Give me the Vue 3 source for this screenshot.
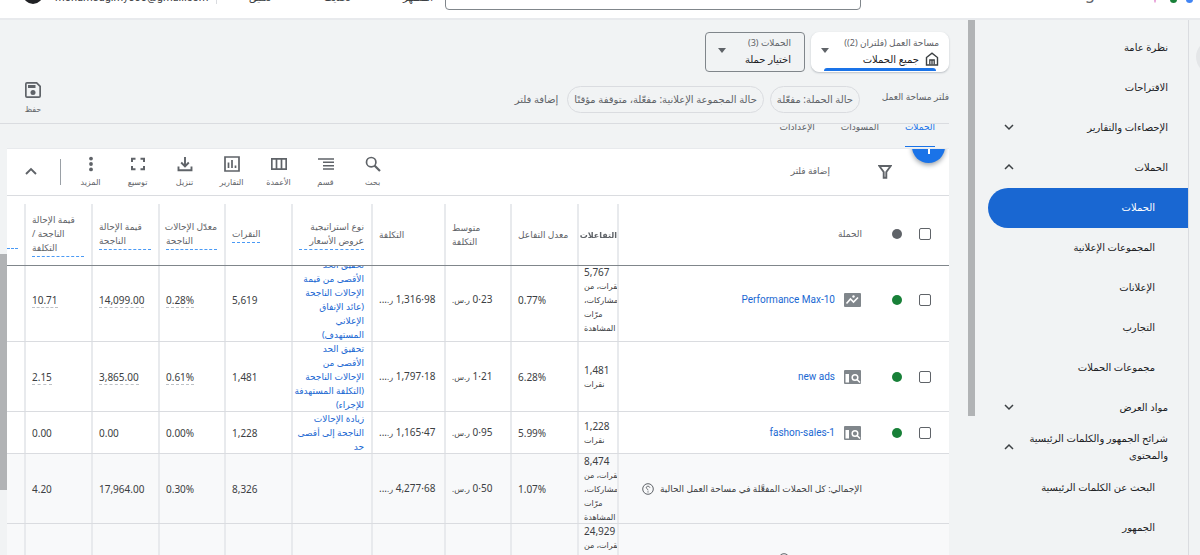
<script setup>
import { ref, onMounted } from 'vue'

const nav = [
  { label: 'نظرة عامة' },
  { label: 'الاقتراحات' },
  { label: 'الإحصاءات والتقارير', arrow: 'down' },
  { label: 'الحملات', arrow: 'up' },
  { label: 'الحملات', sub: true, active: true },
  { label: 'المجموعات الإعلانية', sub: true },
  { label: 'الإعلانات', sub: true },
  { label: 'التجارب', sub: true },
  { label: 'مجموعات الحملات', sub: true },
  { label: 'مواد العرض', arrow: 'down' },
  { label: 'شرائح الجمهور والكلمات الرئيسية والمحتوى', arrow: 'up' },
  { label: 'البحث عن الكلمات الرئيسية', sub: true },
  { label: 'الجمهور', sub: true }
]

const tools = [
  { id: 'search', label: 'بحث' },
  { id: 'segment', label: 'قسم' },
  { id: 'columns', label: 'الأعمدة' },
  { id: 'reports', label: 'التقارير' },
  { id: 'download', label: 'تنزيل' },
  { id: 'expand', label: 'توسيع' },
  { id: 'more', label: 'المزيد' }
]

const heads = [
  { key: 'inter', lines: ['التفاعلات'], bold: true },
  { key: 'rate', lines: ['معدل التفاعل'] },
  { key: 'avg', lines: ['متوسط', 'التكلفة'] },
  { key: 'cost', lines: ['التكلفة'] },
  { key: 'strategy', lines: ['نوع استراتيجية', 'عروض الأسعار'], dashed: true },
  { key: 'clicks', lines: ['النقرات'], dashed: true },
  { key: 'conv', lines: ['معدّل الإحالات', 'الناجحة'], dashed: true },
  { key: 'value', lines: ['قيمة الإحالة', 'الناجحة'], dashed: true },
  { key: 'ratio', lines: ['قيمة الإحالة', 'الناجحة /', 'التكلفة'], dashed: true }
]

const mixed = ['نقرات، من', 'مشاركات،', 'مرّات', 'المشاهدة']
const rows = [
  {
    name: 'Performance Max-10', type: 'pmax', inter: ['5,767', ...mixed], rate: '0.77%', avg: '0·23', cost: '1,316·98',
    strategy: ['تحقيق الحد', 'الأقصى من قيمة', 'الإحالات الناجحة', '(عائد الإنفاق', 'الإعلاني', 'المستهدف)'],
    clicks: '5,619', conv: '0.28%', value: '14,099.00', ratio: '10.71', under: true
  },
  {
    name: 'new ads', type: 'search', inter: ['1,481', 'نقرات'], rate: '6.28%', avg: '1·21', cost: '1,797·18',
    strategy: ['تحقيق الحد', 'الأقصى من', 'الإحالات الناجحة', '(التكلفة المستهدفة', 'للإجراء)'],
    clicks: '1,481', conv: '0.61%', value: '3,865.00', ratio: '2.15', under: true
  },
  {
    name: 'fashon-sales-1', type: 'search', inter: ['1,228', 'نقرات'], rate: '5.99%', avg: '0·95', cost: '1,165·47',
    strategy: ['زيادة الإحالات', 'الناجحة إلى أقصى', 'حد'],
    clicks: '1,228', conv: '0.00%', value: '0.00', ratio: '0.00'
  },
  {
    total: 'الإجمالي: كل الحملات المفعَّلة في مساحة العمل الحالية', inter: ['8,474', ...mixed], rate: '1.07%', avg: '0·50', cost: '4,277·68',
    strategy: [], clicks: '8,326', conv: '0.30%', value: '17,964.00', ratio: '4.20'
  },
  { total: 'الإجمالي: الحساب', inter: ['24,929', ...mixed], strategy: [] }
]

const grid = ref(null)
onMounted(() => { grid.value.scrollTop = 8 })
</script>

<template>
  <div class="page" dir="rtl">
    <header class="top">
      <div class="brand">
        <span>Google</span>
        <i class="mark pink"></i><i class="mark green"></i><i class="mark blue"></i>
      </div>
      <input class="search" type="text" aria-label="بحث">
      <div class="links">
        <a href="#">المظهر</a>
        <a href="#">تحديث</a>
        <a href="#">تعليق</a>
      </div>
      <div class="account"><span dir="ltr">mohamedgimy500@gmail.com</span><i class="avatar"></i></div>
    </header>

    <div class="body">
      <div class="rail"><button class="rail-btn" aria-label="القائمة"></button></div>
      <nav class="side">
        <a v-for="(n, i) in nav" :key="i" href="#" class="item" :class="{ sub: n.sub, active: n.active }">
          <span>{{ n.label }}</span>
          <svg v-if="n.arrow" width="12" height="12" viewBox="0 0 12 12" fill="none" stroke="#3c4043" stroke-width="1.5">
            <path :d="n.arrow === 'down' ? 'M2 4l4 4 4-4' : 'M2 8l4-4 4 4'" />
          </svg>
        </a>
      </nav>
      <div class="track"><i class="thumb"></i></div>

      <main class="main">
        <section class="scope">
          <div class="cards">
            <button class="card on">
              <span class="card-text">
                <span class="small">مساحة العمل (فلتران (2))</span>
                <span class="big">
                  <svg width="14" height="14" viewBox="0 0 14 14" fill="none" stroke="#3c4043" stroke-width="1.4">
                    <path d="M1.500 5.500L7 1.200l5.500 4.300V13h-11z" /><path d="M4.800 12.500V8h4.400v4.500M7 8v4.500" stroke-width="1.300" />
                  </svg>جميع الحملات</span>
              </span>
              <i class="caret"></i>
            </button>
            <button class="card">
              <span class="card-text">
                <span class="small">الحملات (3)</span>
                <span class="big">اختيار حملة</span>
              </span>
              <i class="caret"></i>
            </button>
          </div>
          <div class="filters">
            <span class="flabel">فلتر مساحة العمل</span>
            <button class="chip">حالة الحملة: مفعّلة</button>
            <button class="chip">حالة المجموعة الإعلانية: مفعّلة، متوقفة مؤقتًا</button>
            <button class="plain">إضافة فلتر</button>
          </div>
          <button class="save">
            <svg width="16" height="16" viewBox="0 0 16 16" fill="#5f6368">
              <path fill-rule="evenodd" d="M2 0h10l4 4v10a2 2 0 0 1-2 2H2a2 2 0 0 1-2-2V2a2 2 0 0 1 2-2zM1.700 1.700v12.600h12.600V4.700l-3-3z" />
              <path d="M3 3h7.500v3H3z" /><circle cx="8" cy="10.500" r="2.500" />
            </svg>
            <span>حفظ</span>
          </button>
        </section>

        <div class="tabs">
          <a href="#" class="tab cur">الحملات</a>
          <a href="#" class="tab">المسودات</a>
          <a href="#" class="tab">الإعدادات</a>
        </div>

        <section class="panel-wrap">
          <div class="panel">
            <div class="toolbar">
              <div class="fab-clip"><button class="fab" aria-label="إضافة">
                <svg width="14" height="14" viewBox="0 0 14 14" stroke="#fff" stroke-width="2"><path d="M7 0v14M0 7h14" /></svg>
              </button></div>
              <svg class="funnel" width="14" height="14" viewBox="0 0 14 14" fill="none" stroke="#5f6368" stroke-width="1.900">
                <path d="M1.300 1h11.400L8.300 7v5.800H5.700V7z" />
              </svg>
              <button class="add">إضافة فلتر</button>
              <div class="tools">
                <button v-for="t in tools" :key="t.id" class="tool">
                  <svg width="16" height="16" viewBox="0 0 16 16" fill="none" stroke="#5f6368" stroke-width="1.700">
                    <g v-if="t.id === 'search'"><circle cx="6.200" cy="6.200" r="4.700" /><path d="M9.500 9.500l5.500 5.500" stroke-width="2.200" /></g>
                    <path v-else-if="t.id === 'segment'" d="M0 3h16M5 6.300h11M5 9.700h11M5 13h11" stroke-width="1.500" />
                    <path v-else-if="t.id === 'columns'" d="M.8 2.800h14.400v10.400H.8zM5.500 3v10M10.500 3v10" />
                    <path v-else-if="t.id === 'reports'" d="M1 1h14v14H1zM4.500 12V6.500M8 12V4M11.500 12V9.500" />
                    <path v-else-if="t.id === 'download'" d="M8 1v9M4.200 6.500L8 10.300l3.800-3.800M1.500 10.500v3.700h13v-3.700" stroke-width="1.900" />
                    <path v-else-if="t.id === 'expand'" d="M2 6V2.800h3.500M10.500 2.800H14V6M14 10v3.200h-3.500M5.500 13.200H2V10" stroke-width="2" />
                    <g v-else fill="#5f6368" stroke="none"><circle cx="8" cy="2.600" r="1.900" /><circle cx="8" cy="8" r="1.900" /><circle cx="8" cy="13.400" r="1.900" /></g>
                  </svg>
                  <span>{{ t.label }}</span>
                </button>
              </div>
              <button class="fold" aria-label="طي">
                <svg width="14" height="14" viewBox="0 0 14 14" fill="none" stroke="#5f6368" stroke-width="1.900"><path d="M2 9l5-5 5 5" /></svg>
              </button>
            </div>

            <div ref="grid" class="grid">
              <table>
                <thead>
                  <tr>
                    <th class="camp">
                      <div class="camp-in">
                        <input type="checkbox" aria-label="تحديد الكل"><i class="dot grey"></i><span class="camp-title">الحملة</span>
                      </div>
                    </th>
                    <th v-for="h in heads" :key="h.key" :class="[h.key, { bold: h.bold }]">
                      <div class="head" :class="{ dashed: h.dashed, multi: h.lines.length > 1 }"><span v-for="l in h.lines" :key="l">{{ l }}</span></div>
                    </th>
                    <th class="edge"><div class="head dashed">&nbsp;</div></th>
                  </tr>
                </thead>
                <tbody>
                  <tr v-for="(r, i) in rows" :key="i" :class="{ sum: r.total }">
                    <td class="camp">
                      <div v-if="r.name" class="camp-in">
                        <input type="checkbox" :aria-label="r.name"><i class="dot"></i>
                        <svg v-if="r.type === 'pmax'" class="kind" width="17" height="14" viewBox="0 0 17 14">
                          <rect width="17" height="14" rx="1" fill="#80868b" />
                          <path d="M2.500 10.500L6.500 6l3 3L14 4.500" fill="none" stroke="#fff" stroke-width="1.600" /><circle cx="9.500" cy="3.500" r="1.200" fill="#fff" />
                        </svg>
                        <svg v-else class="kind" width="17" height="14" viewBox="0 0 17 14">
                          <rect width="17" height="14" rx="1" fill="#80868b" /><path d="M1.500 4H5v8.500H1.500z" fill="#fff" />
                          <circle cx="11" cy="7.500" r="2.800" fill="none" stroke="#fff" stroke-width="1.500" /><path d="M13 9.500l3 3" stroke="#fff" stroke-width="1.600" />
                        </svg>
                        <a href="#" dir="ltr">{{ r.name }}</a>
                      </div>
                      <div v-else class="total">
                        <span>{{ r.total }}</span>
                        <svg width="12" height="12" viewBox="0 0 12 12" fill="none" stroke="#5f6368"><circle cx="6" cy="6" r="5.300" /><path d="M7.800 4.700C7.600 2.700 4.300 2.800 4.300 4.600c0 1.300 1.700 1.300 1.700 2.700M6 8.300v1.200" /></svg>
                      </div>
                    </td>
                    <td class="inter"><div class="stack" dir="ltr"><span v-for="l in r.inter" :key="l" dir="rtl" :class="{ num: l === r.inter[0] }">{{ l }}</span></div></td>
                    <td class="rate"><span dir="ltr">{{ r.rate }}</span></td>
                    <td class="avg"><template v-if="r.avg"><bdi dir="ltr">{{ r.avg }}</bdi> <small>ر.س.</small></template></td>
                    <td class="cost"><template v-if="r.cost"><bdi dir="ltr">{{ r.cost }}</bdi> <small>ر.</small>...</template></td>
                    <td class="strategy"><a href="#"><span v-for="l in r.strategy" :key="l">{{ l }}</span></a></td>
                    <td class="clicks">{{ r.clicks }}</td>
                    <td class="conv"><span dir="ltr" :class="{ under: r.under }">{{ r.conv }}</span></td>
                    <td class="value"><span :class="{ under: r.under }">{{ r.value }}</span></td>
                    <td class="ratio"><span :class="{ under: r.under }">{{ r.ratio }}</span></td>
                    <td class="edge"></td>
                  </tr>
                </tbody>
              </table>
            </div>
          </div>
          <div class="left-track"><i></i></div>
        </section>
      </main>
    </div>
  </div>
</template>

<style>
body { margin: 0; }
</style>

<style scoped>
* { box-sizing: border-box; }
button { font: inherit; color: inherit; background: none; border: 0; padding: 0; margin: 0; }
a { color: inherit; text-decoration: none; }
i { display: block; flex: none; }
svg { display: block; flex: none; }
.page { height: 100vh; overflow: hidden; display: flex; flex-direction: column; background: #f1f3f4; color: #3c4043; font: 10px/14px "Noto Sans", "DejaVu Sans", sans-serif; }
.top { height: 20px; flex: none; background: #fff; border-bottom: 2px solid #e8eaed; overflow: hidden; display: flex; align-items: flex-end; padding: 0 7px 0 23px; }
.top > * { flex: none; }
.brand { width: 332px; height: 34px; display: flex; align-items: flex-start; color: #5f6368; font-size: 16px; line-height: 18px; direction: ltr; justify-content: flex-end; }
.mark { width: 7px; height: 7px; border-radius: 50%; margin-top: 12px; }
.pink { background: #e8a0d8; width: 2px; margin-left: 46px; }
.green { background: #188038; margin-left: 14px; }
.blue { background: #4285f4; margin-left: 9px; }
.top .search { flex: 1; min-width: 0; height: 32px; border: 1px solid #80868b; border-radius: 4px; margin-bottom: 8px; background: #fff; }
.links { width: 229px; height: 28px; display: flex; justify-content: space-between; padding: 0 12px 0 32px; border-left: 1px solid #dadce0; margin-bottom: 14px; }
.links a { align-self: flex-end; }
.account { width: 193px; display: flex; align-items: flex-end; justify-content: flex-end; gap: 12px; margin-bottom: 14px; font: 11px/14px Roboto, sans-serif; color: #3c4043; }
.account span { margin-bottom: -1px; }
.avatar { width: 20px; height: 20px; border-radius: 50%; background: #202124; }
.body { flex: 1; min-height: 0; display: flex; }
.rail { width: 12px; flex: none; border-left: 1px solid #dadce0; overflow: hidden; position: relative; }
.rail-btn { position: absolute; top: 20px; right: -30px; width: 34px; height: 34px; border-radius: 50%; background: #e4e6e8; }
.side { width: 213px; flex: none; padding-top: 8px; overflow: hidden; line-height: 17px; color: #202124; }
.item { display: flex; align-items: center; justify-content: space-between; height: 40px; padding: 0 20px 2px 28px; }
.item span { flex: 0 1 140px; }
.item.sub { padding-right: 33px; }
.item.sub span { flex: 1; }
.item.active { background: #1967d2; color: #fff; margin-left: 13px; border-radius: 20px 0 0 20px; }
.track { width: 7px; flex: none; }
.thumb { height: 396px; background: #b1b3b5; }
.main { flex: 1; min-width: 0; display: flex; flex-direction: column; }
.scope { height: 104px; flex: none; margin-right: 19px; padding-top: 12px; border-bottom: 1px solid #dadce0; position: relative; }
.cards { display: flex; gap: 6px; }
.card { position: relative; height: 40px; width: 100px; border: 1px solid #80868b; border-radius: 4px; display: flex; justify-content: space-between; align-items: center; padding: 0 13px 3px 12px; text-align: right; color: #202124; }
.card.on { width: 138px; border-color: #fff; border-radius: 8px; background: #fff; box-shadow: 0 1px 2px #bdc1c6; padding: 0 9px 3px; }
.card.on::after { content: ""; position: absolute; inset: auto 12px 0; height: 3px; border-radius: 3px 3px 0 0; background: #1a73e8; }
.card-text { display: flex; flex-direction: column; white-space: nowrap; }
.small { color: #5f6368; font-size: 9px; line-height: 16px; }
.big { display: flex; gap: 6px; align-items: center; line-height: 16px; }
.caret { border: 4px solid transparent; border-top: 5px solid #5f6368; border-bottom: 0; }
.filters { display: flex; align-items: center; margin-top: 14px; color: #5f6368; white-space: nowrap; }
.flabel { width: 89px; padding-bottom: 6px; font-size: 9px; }
.chip { height: 27px; border: 1px solid #dadce0; border-radius: 14px; padding: 0 6px 2px; margin-left: 6px; }
.plain { margin-right: 3px; padding-bottom: 2px; }
.save { position: absolute; top: 62px; left: 18px; width: 30px; display: flex; flex-direction: column; align-items: center; gap: 5px; color: #5f6368; font-size: 8px; line-height: 12px; }
.tabs { height: 24px; flex: none; overflow: hidden; display: flex; gap: 26px; padding-right: 33px; color: #5f6368; font-size: 9px; }
.tab { height: 24px; margin-top: -1px; line-height: 8px; }
.tab.cur { color: #1a73e8; border-bottom: 1px solid #1a73e8; }
.panel-wrap { flex: 1; min-height: 0; display: flex; padding-right: 19px; }
.left-track { width: 7px; flex: none; padding-top: 106px; }
.left-track i { height: 236px; background: #b1b3b5; }
.panel { flex: 1; min-width: 0; background: #fff; border-top: 1px solid #e8eaed; display: flex; flex-direction: column; }
.toolbar { height: 47px; flex: none; display: flex; align-items: center; border-bottom: 1px solid #dadce0; }
.fab-clip { width: 42px; height: 46px; overflow: hidden; }
.fab { width: 33px; height: 33px; margin: -19px 4px 0; border-radius: 50%; background: #1a73e8; box-shadow: 0 2px 5px #9aa0a6; display: grid; place-items: center; }
.funnel { margin-right: 15px; }
.add { margin-right: 48px; padding-bottom: 2px; color: #5f6368; white-space: nowrap; font-size: 9px; }
.tools { margin-right: auto; display: flex; color: #5f6368; font-size: 8px; line-height: 12px; }
.tool { width: 47px; display: flex; flex-direction: column; align-items: center; gap: 4px; white-space: nowrap; }
.fold { width: 54px; height: 26px; border-right: 1px solid #9aa0a6; margin-right: 6px; display: flex; align-items: center; justify-content: center; padding-right: 6px; }
.grid { flex: 1; min-height: 0; overflow: hidden; }
table { width: 100%; table-layout: fixed; border-spacing: 0; }
th, td { padding: 0 7px 0 8px; text-align: left; vertical-align: middle; font-weight: 400; white-space: nowrap; }
th { position: sticky; top: 0; z-index: 1; height: 70px; background: linear-gradient(#e8eaed, #e8eaed) 0 8px / 2px 100% no-repeat #fff; border-bottom: 1px solid #80868b; color: #5f6368; padding-top: 9px; font-size: 9px; }
td { background: linear-gradient(#dadce0, #dadce0) 0 100% / 100% 1px no-repeat, linear-gradient(#e8eaed, #e8eaed) 0 0 / 2px 100% no-repeat; }
td { padding-bottom: 1px; line-height: 14px; }
td.strategy, td.inter { padding-bottom: 0; }
th.camp, td.camp { padding-right: 0; }
th.camp { padding-top: 7px; }
td.edge, th.edge { width: 17px; padding: 0; }
th.edge { background: #fff; }
td.edge { background: linear-gradient(#dadce0, #dadce0) 0 100% / 100% 1px no-repeat; }
.inter { width: 40px; }
th.inter, td.inter { padding-left: 7px; padding-right: 0; }
th.inter { font-size: 8px; }
.rate { width: 67px; }
.avg { width: 66px; }
.cost { width: 73px; }
.strategy { width: 80px; }
.clicks { width: 67px; }
.conv { width: 66px; }
.value, .ratio { width: 67px; }
.strategy, th.strategy { text-align: right; font-size: 9px; }
.strategy a { color: #1967d2; }
.strategy span { display: block; }
.sum td { background-color: #f8f9fa; }
.head { display: inline-block; vertical-align: middle; }
.head.multi { display: block; }
.head span { display: block; }
.head.dashed { border-bottom: 1px dashed #4a9af5; padding-bottom: 1px; }
.edge .head { width: 11px; margin-top: 20px; }
.bold { font-weight: 700; }
.stack { width: 33px; overflow: hidden; font-size: 8px; }
.stack span { display: block; width: max-content; }
.stack .num { font-size: 10px; }
.camp-in { display: flex; align-items: center; padding-right: 18px; }
.camp-in input { appearance: none; width: 12px; height: 12px; margin: 0; border: 1px solid #5f6368; border-radius: 2px; background: #fff; }
.dot { width: 10px; height: 10px; border-radius: 50%; background: #188038; margin-right: 17px; }
.dot.grey { background: #5f6368; }
.camp-title { margin-right: 30px; }
.kind { margin-right: 31px; }
.camp-in a { font: 10px/14px Roboto, sans-serif; color: #1967d2; margin-right: 9px; }
.total { display: flex; align-items: center; gap: 6px; padding-right: 87px; font-size: 9px; }
.under { border-bottom: 1px dashed #bdc1c6; }
small { font-size: 8px; }
</style>
